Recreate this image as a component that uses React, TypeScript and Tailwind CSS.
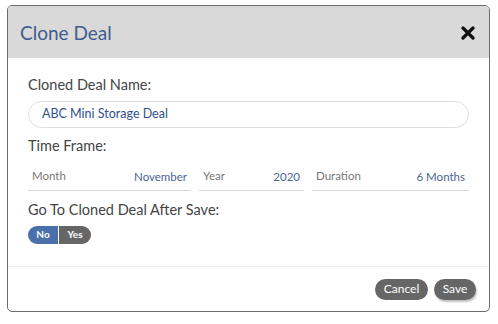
export default function App() {
  return (
    <div className="w-[498px] h-[324px] bg-white pt-[5px] pl-[7px] font-['Lato',sans-serif]">
      <div className="w-[483px] h-[307px] border-[1.5px] border-[#6b6b6b] rounded-[5px] overflow-hidden bg-white flex flex-col">
        <div className="h-[52px] shrink-0 bg-[#d9d9d9] flex items-center justify-between pl-[12px] pr-[14px]">
          <span className="text-[19px] text-[#3e5d8e] leading-none">Clone Deal</span>
          <svg width="14" height="14" viewBox="0 0 14 14" className="mt-[1px]">
            <path d="M2 2 L12 12 M12 2 L2 12" stroke="#111" strokeWidth="3.2" strokeLinecap="round" />
          </svg>
        </div>
        <div className="flex-1 px-[20px] pt-[20px] flex flex-col">
          <div className="text-[14.5px] text-[#444] leading-none">Cloned Deal Name:</div>
          <div className="mt-[8px] h-[27px] rounded-full border border-[#dedede] flex items-center pl-[13px] text-[12.5px] text-[#2f4f8f]">
            ABC Mini Storage Deal
          </div>
          <div className="mt-[11px] text-[14.5px] text-[#444] leading-none">Time Frame:</div>
          <div className="mt-[14px] flex gap-[8px] text-[11.5px]">
            <div className="w-[163px] h-[24px] border-b-[1.5px] border-[#d6d6d6] flex justify-between items-start px-[4px]">
              <span className="text-[#777]">Month</span>
              <span className="text-[#4a6496] mt-[1px]">November</span>
            </div>
            <div className="w-[105px] h-[24px] border-b-[1.5px] border-[#d6d6d6] flex justify-between items-start px-[4px]">
              <span className="text-[#777]">Year</span>
              <span className="text-[#4a6496] mt-[1px]">2020</span>
            </div>
            <div className="flex-1 h-[24px] border-b-[1.5px] border-[#d6d6d6] flex justify-between items-start px-[4px]">
              <span className="text-[#777]">Duration</span>
              <span className="text-[#4a6496] mt-[1px]">6 Months</span>
            </div>
          </div>
          <div className="mt-[12px] text-[14.5px] text-[#444] leading-none">Go To Cloned Deal After Save:</div>
          <div className="mt-[8px] flex h-[18px] w-[63px] text-[10px] font-bold text-white">
            <div className="w-[30px] bg-[#4a70ab] rounded-l-full flex items-center justify-center">No</div>
            <div className="w-[1px] bg-white" />
            <div className="flex-1 bg-[#666] rounded-r-full flex items-center justify-center">Yes</div>
          </div>
        </div>
        <div className="h-[1.5px] bg-[#efefef]" />
        <div className="h-[44px] shrink-0 flex items-center justify-end gap-[6px] pr-[13px] text-[12px] text-white">
          <div className="w-[53px] h-[21px] rounded-full bg-[#666] flex items-center justify-center">Cancel</div>
          <div className="w-[42px] h-[21px] rounded-full bg-[#666] flex items-center justify-center shadow-[1px_2px_2px_rgba(0,0,0,0.25)]">Save</div>
        </div>
      </div>
    </div>
  );
}
